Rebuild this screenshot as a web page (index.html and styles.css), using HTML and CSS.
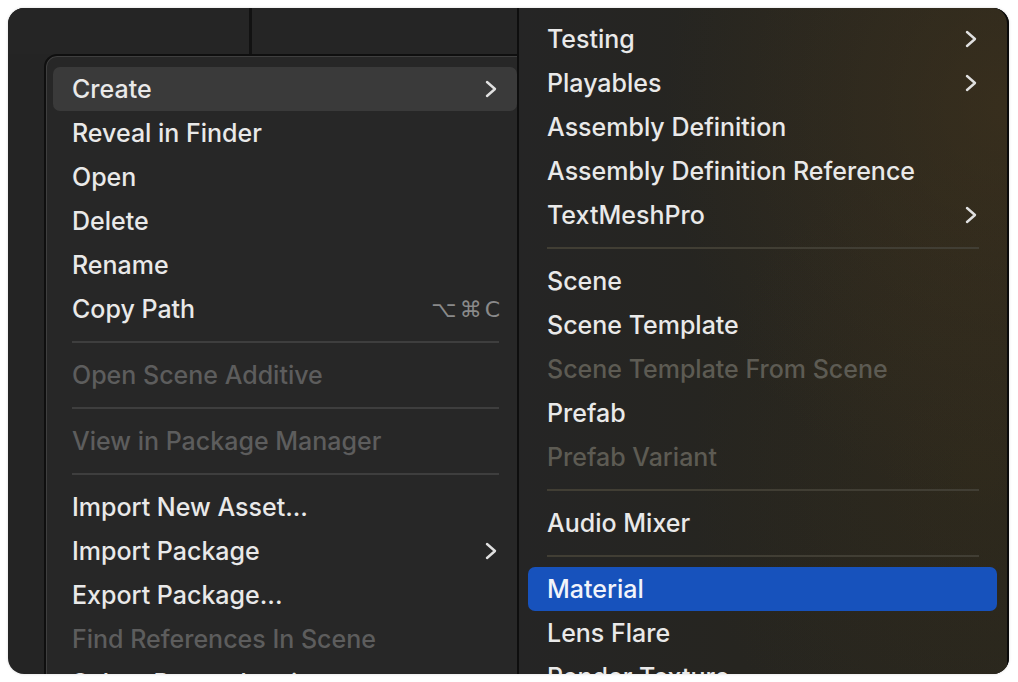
FILE: index.html
```html
<!DOCTYPE html>
<html>
<head>
<meta charset="utf-8">
<link rel="stylesheet" href="styles.css">
</head>
<body>
<div class="frame">
  <div class="backdrop">
    <div class="pane pane-left"></div>
    <div class="pane pane-right"></div>
  </div>

  <div class="menu menu-main">
    <div class="item hover"><span class="label">Create</span><svg class="chev" viewBox="0 0 12 18"><polyline points="2,2 10,9 2,16"/></svg></div>
    <div class="item"><span class="label">Reveal in Finder</span></div>
    <div class="item"><span class="label">Open</span></div>
    <div class="item"><span class="label">Delete</span></div>
    <div class="item"><span class="label">Rename</span></div>
    <div class="item"><span class="label">Copy Path</span><span class="shortcut">⌥⌘C</span></div>
    <div class="sep"></div>
    <div class="item disabled"><span class="label">Open Scene Additive</span></div>
    <div class="sep"></div>
    <div class="item disabled"><span class="label">View in Package Manager</span></div>
    <div class="sep"></div>
    <div class="item"><span class="label">Import New Asset...</span></div>
    <div class="item"><span class="label">Import Package</span><svg class="chev" viewBox="0 0 12 18"><polyline points="2,2 10,9 2,16"/></svg></div>
    <div class="item"><span class="label">Export Package...</span></div>
    <div class="item disabled"><span class="label">Find References In Scene</span></div>
    <div class="item"><span class="label">Select Dependencies</span></div>
  </div>

  <div class="menu menu-sub">
    <div class="item"><span class="label">Testing</span><svg class="chev" viewBox="0 0 12 18"><polyline points="2,2 10,9 2,16"/></svg></div>
    <div class="item"><span class="label">Playables</span><svg class="chev" viewBox="0 0 12 18"><polyline points="2,2 10,9 2,16"/></svg></div>
    <div class="item"><span class="label">Assembly Definition</span></div>
    <div class="item"><span class="label">Assembly Definition Reference</span></div>
    <div class="item"><span class="label">TextMeshPro</span><svg class="chev" viewBox="0 0 12 18"><polyline points="2,2 10,9 2,16"/></svg></div>
    <div class="sep"></div>
    <div class="item"><span class="label">Scene</span></div>
    <div class="item"><span class="label">Scene Template</span></div>
    <div class="item disabled"><span class="label">Scene Template From Scene</span></div>
    <div class="item"><span class="label">Prefab</span></div>
    <div class="item disabled"><span class="label">Prefab Variant</span></div>
    <div class="sep"></div>
    <div class="item"><span class="label">Audio Mixer</span></div>
    <div class="sep"></div>
    <div class="item selected"><span class="label">Material</span></div>
    <div class="item"><span class="label">Lens Flare</span></div>
    <div class="item"><span class="label">Render Texture</span></div>
  </div>
</div>
</body>
</html>
```

FILE: styles.css
```css
html, body {
  margin: 0;
  padding: 0;
  background: #ffffff;
}

body {
  padding: 8px;
  font-family: Inter, "Noto Sans", "DejaVu Sans", sans-serif;
}

.frame {
  position: relative;
  width: 1001px;
  height: 666px;
  border-radius: 16px;
  overflow: hidden;
  background: #242424;
  box-shadow: 0 0 3px rgba(0,0,0,0.15);
}

.backdrop {
  display: flex;
  height: 46px;
}

.pane {
  height: 100%;
  background: #252525;
}

.pane-left {
  width: 241px;
  border-right: 3px solid #121212;
}

.pane-right {
  flex: 1;
}

.menu {
  position: absolute;
  display: flex;
  flex-direction: column;
  box-sizing: border-box;
}

.menu-main {
  left: 36px;
  top: 46px;
  width: 483px;
  height: 640px;
  padding: 11px 8px 0 7px;
  background: #272727;
  border: 2px solid #0f0f0f;
  border-top-left-radius: 13px;
  box-shadow: inset 0 0 0 1px #3f3f3f;
}

.menu-sub {
  left: 509px;
  top: 0;
  right: 0;
  bottom: 0;
  padding: 9px 10px 0 9px;
  border-left: 2px solid #0e0e0e;
  border-right: 2px solid #0a0a0a;
  border-top-right-radius: 16px;
  background:
    radial-gradient(ellipse 70% 60% at 100% 15%, rgba(74, 56, 28, 0.45), rgba(74, 56, 28, 0) 100%),
    radial-gradient(ellipse 60% 50% at 95% 70%, rgba(60, 48, 24, 0.30), rgba(60, 48, 24, 0) 100%),
    linear-gradient(90deg, #252525 0%, #262520 45%, #28261e 100%);
}

.item {
  display: flex;
  align-items: center;
  flex: none;
  height: 44px;
  padding: 0 20px 0 19px;
  border-radius: 7px;
  color: #e9e9e9;
  font-size: 25px;
  font-weight: 500;
  white-space: nowrap;
}

.label {
  flex: 1;
}

.item.hover {
  background: #3a3a3a;
}

.item.selected {
  background: #1752bc;
  color: #f2f4fa;
}

.item.disabled {
  color: #5d5d5d;
}

.menu-sub .item.disabled {
  color: #5d5b53;
}

.shortcut {
  color: #8a8a8a;
  font-family: "DejaVu Sans", sans-serif;
  font-size: 22px;
  letter-spacing: 3px;
  margin-right: -6px;
}

.chev {
  width: 12px;
  height: 18px;
  fill: none;
  stroke: #e0e0e0;
  stroke-width: 2.4;
  stroke-linecap: round;
  stroke-linejoin: round;
}

.sep {
  flex: none;
  height: 22px;
  display: flex;
  align-items: center;
  padding: 0 18px 0 19px;
}

.sep::before {
  content: "";
  flex: 1;
  height: 2px;
  background: #3e3e3e;
}

.menu-sub .sep::before {
  background: #413e34;
}
```
